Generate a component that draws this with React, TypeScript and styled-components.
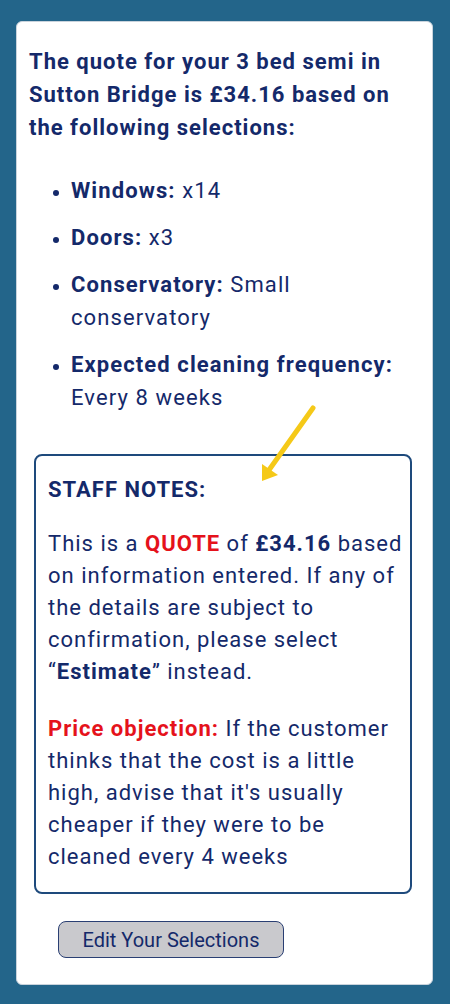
import * as React from 'react'
import styled, { createGlobalStyle } from 'styled-components'

const navy = '#14296a'
const red = '#e5121b'

const GlobalStyle = createGlobalStyle`
  html, body {
    margin: 0;
    padding: 0;
    background: #23658a;
  }
  body {
    font-family: Roboto, 'Liberation Sans', sans-serif;
    color: ${navy};
  }
`

const Page = styled.div`
  padding: 21px 17px 18px 16px;
  min-height: 1004px;
  box-sizing: border-box;
`

const Card = styled.div`
  position: relative;
  background: #fff;
  border: 1px solid #c9d3dc;
  border-radius: 6px;
  padding: 23px 10px 26px 12px;
`

const Heading = styled.h2`
  margin: 0;
  font-size: 22px;
  line-height: 33px;
  font-weight: 700;
  letter-spacing: 1px;
`

const List = styled.ul`
  margin: 30px 0 0;
  padding: 0 0 0 42px;
  font-size: 22px;
  line-height: 33px;
  letter-spacing: 1.1px;
  li {
    margin-bottom: 14px;
    &::marker {
      font-size: 18px;
    }
  }
  li:last-child {
    margin-bottom: 0;
  }
  b {
    font-weight: 700;
  }
`

const NotesBox = styled.div`
  margin: 40px 10px 0 5px;
  border: 2px solid #1e4a7c;
  border-radius: 8px;
  padding: 18px 2px 19px 12px;
  font-size: 22px;
  line-height: 32px;
  letter-spacing: 1px;
`

const NotesTitle = styled.div`
  font-weight: 700;
  margin-bottom: 22px;
`

const Para = styled.p`
  margin: 0 0 25px;
  &:last-child {
    margin-bottom: 0;
  }
  b {
    font-weight: 700;
  }
`

const Red = styled.b`
  color: ${red};
`

const EditButton = styled.button`
  display: block;
  margin: 27px 0 0 29px;
  width: 226px;
  height: 37px;
  background: #c9c9cd;
  border: 1px solid #2a3f73;
  border-radius: 8px;
  font-family: Roboto, 'Liberation Sans', sans-serif;
  font-size: 20px;
  color: ${navy};
  padding: 0;
  cursor: pointer;
`

const Arrow = styled.svg`
  position: absolute;
  left: 233px;
  top: 378px;
  width: 80px;
  height: 90px;
  pointer-events: none;
`

export default function App() {
  return (
    <Page>
      <GlobalStyle />
      <Card>
        <Heading>
          The quote for your 3 bed semi in Sutton Bridge is £34.16 based on the following selections:
        </Heading>
        <List>
          <li>
            <b>Windows:</b> x14
          </li>
          <li>
            <b>Doors:</b> x3
          </li>
          <li>
            <b>Conservatory:</b> Small conservatory
          </li>
          <li>
            <b>Expected cleaning frequency:</b> Every 8 weeks
          </li>
        </List>
        <NotesBox>
          <NotesTitle>STAFF NOTES:</NotesTitle>
          <Para>
            This is a <Red>QUOTE</Red> of <b>£34.16</b> based on information entered. If any of the
            details are subject to confirmation, please select “<b>Estimate</b>” instead.
          </Para>
          <Para>
            <Red>Price objection:</Red> If the customer thinks that the cost is a little high,
            advise that it's usually cheaper if they were to be cleaned every 4 weeks
          </Para>
        </NotesBox>
        <EditButton>Edit Your Selections</EditButton>
        {/* yellow pointer drawn over the notes box */}
        <Arrow viewBox="0 0 80 90">
          <line x1="63" y1="8" x2="19" y2="70" stroke="#f5c918" strokeWidth="5" strokeLinecap="round" />
          <polygon points="12,81 12,64 28,75" fill="#f5c918" />
        </Arrow>
      </Card>
    </Page>
  )
}
